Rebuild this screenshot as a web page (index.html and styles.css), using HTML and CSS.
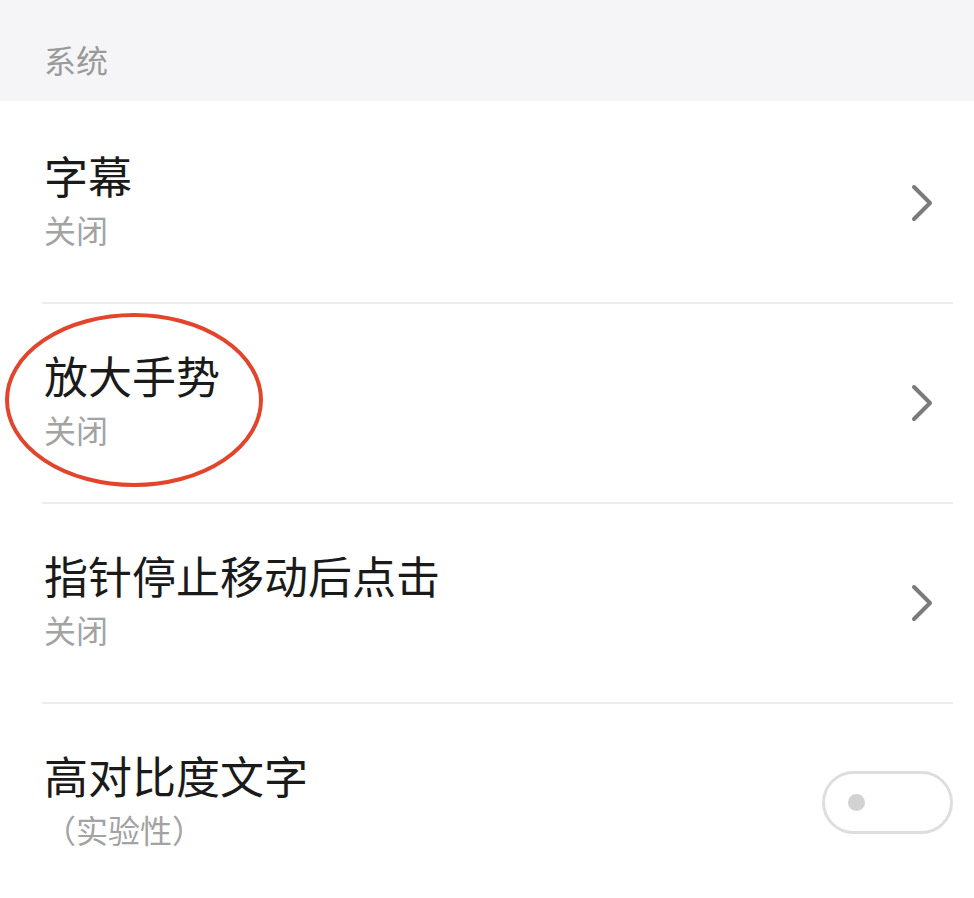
FILE: index.html
```html
<!DOCTYPE html>
<html lang="zh-CN">
<head>
<meta charset="utf-8">
<title>系统</title>
<link rel="stylesheet" href="styles.css">
</head>
<body>
<div class="section-header">系统</div>
<div class="list">
  <div class="row">
    <div class="row-inner">
      <div class="texts">
        <div class="title">字幕</div>
        <div class="subtitle">关闭</div>
      </div>
      <svg class="chevron" viewBox="0 0 24 40" width="24" height="40"><path d="M4 4 L20 20 L4 36" fill="none" stroke="#7b7b7b" stroke-width="4" stroke-linecap="round" stroke-linejoin="round"/></svg>
    </div>
  </div>
  <div class="row">
    <div class="row-inner">
      <div class="texts">
        <div class="title">放大手势</div>
        <div class="subtitle">关闭</div>
      </div>
      <svg class="chevron" viewBox="0 0 24 40" width="24" height="40"><path d="M4 4 L20 20 L4 36" fill="none" stroke="#7b7b7b" stroke-width="4" stroke-linecap="round" stroke-linejoin="round"/></svg>
    </div>
    <svg class="highlight" viewBox="0 0 264 180" width="264" height="180"><ellipse cx="131" cy="89" rx="127" ry="85" fill="none" stroke="#e2452b" stroke-width="4"/></svg>
  </div>
  <div class="row">
    <div class="row-inner">
      <div class="texts">
        <div class="title">指针停止移动后点击</div>
        <div class="subtitle">关闭</div>
      </div>
      <svg class="chevron" viewBox="0 0 24 40" width="24" height="40"><path d="M4 4 L20 20 L4 36" fill="none" stroke="#7b7b7b" stroke-width="4" stroke-linecap="round" stroke-linejoin="round"/></svg>
    </div>
  </div>
  <div class="row">
    <div class="row-inner last">
      <div class="texts">
        <div class="title">高对比度文字</div>
        <div class="subtitle">（实验性）</div>
      </div>
      <div class="toggle"><span class="knob"></span></div>
    </div>
  </div>
</div>
</body>
</html>
```
FILE: styles.css
```css
html, body {
  margin: 0;
  padding: 0;
  background: #ffffff;
  font-family: "Noto Sans CJK SC", "Noto Sans", sans-serif;
}

.section-header {
  height: 101px;
  box-sizing: border-box;
  padding: 43px 0 0 44px;
  background: #f5f5f7;
  color: #9a9a9a;
  font-size: 32px;
  line-height: 32px;
}

.list {
  padding-top: 3px;
}

.row {
  position: relative;
  padding-left: 42px;
  padding-right: 21px;
}

.row-inner {
  display: flex;
  align-items: center;
  justify-content: space-between;
  height: 198px;
  border-bottom: 2px solid #ececec;
}

.row-inner.last {
  border-bottom: none;
}

.texts {
  display: flex;
  flex-direction: column;
  padding-top: 49px;
  padding-left: 2px;
  align-self: flex-start;
}

.title {
  font-size: 44px;
  line-height: 44px;
  color: #1a1a1a;
}

.subtitle {
  margin-top: 16px;
  font-size: 32px;
  line-height: 32px;
  color: #a3a3a3;
}

.chevron {
  margin-right: 19px;
  display: block;
}

.toggle {
  width: 131px;
  height: 63px;
  box-sizing: border-box;
  border: 3px solid #dedede;
  border-radius: 32px;
  background: #ffffff;
  display: flex;
  align-items: center;
  padding-left: 23px;
  margin-top: -2px;
}

.knob {
  width: 17px;
  height: 17px;
  border-radius: 50%;
  background: #d2d2d2;
}

.highlight {
  position: absolute;
  left: 3px;
  top: 7px;
}
```
